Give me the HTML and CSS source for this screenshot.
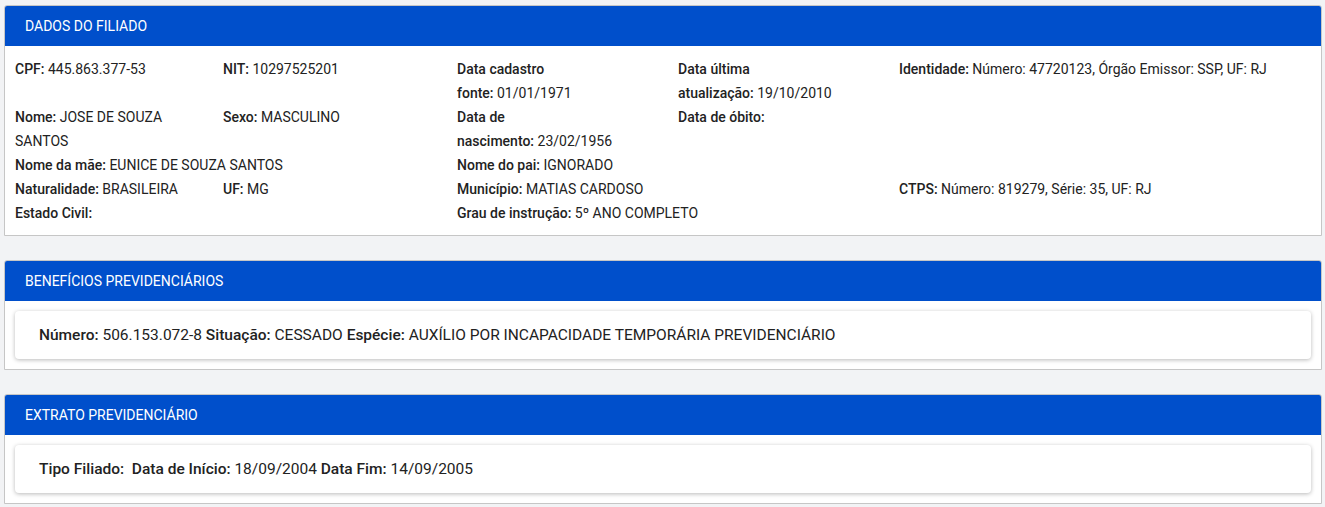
FILE: index.html
```html
<!DOCTYPE html>
<html lang="pt-BR">
<head>
<meta charset="utf-8">
<title>Dados do Filiado</title>
<link rel="stylesheet" href="styles.css">
</head>
<body>
<section class="panel">
  <header class="panel-header">DADOS DO FILIADO</header>
  <div class="panel-body filiado">
    <div class="c1"><b>CPF:</b> 445.863.377-53</div>
    <div class="c2"><b>NIT:</b> 10297525201</div>
    <div class="c3"><b>Data cadastro<br>fonte:</b> 01/01/1971</div>
    <div class="c4"><b>Data última<br>atualização:</b> 19/10/2010</div>
    <div class="c5"><b>Identidade:</b> Número: 47720123, Órgão Emissor: SSP, UF: RJ</div>

    <div class="c1 w180"><b>Nome:</b> JOSE DE SOUZA SANTOS</div>
    <div class="c2"><b>Sexo:</b> MASCULINO</div>
    <div class="c3"><b>Data de<br>nascimento:</b> 23/02/1956</div>
    <div class="c4"><b>Data de óbito:</b></div>

    <div class="c12"><b>Nome da mãe:</b> EUNICE DE SOUZA SANTOS</div>
    <div class="c34"><b>Nome do pai:</b> IGNORADO</div>

    <div class="c1"><b>Naturalidade:</b> BRASILEIRA</div>
    <div class="c2"><b>UF:</b> MG</div>
    <div class="c34"><b>Município:</b> MATIAS CARDOSO</div>
    <div class="c5"><b>CTPS:</b> Número: 819279, Série: 35, UF: RJ</div>

    <div class="c1"><b>Estado Civil:</b></div>
    <div class="c34"><b>Grau de instrução:</b> 5º ANO COMPLETO</div>
  </div>
</section>

<section class="panel">
  <header class="panel-header">BENEFÍCIOS PREVIDENCIÁRIOS</header>
  <div class="panel-body padded">
    <div class="card"><b>Número:</b> 506.153.072-8 <b>Situação:</b> CESSADO <b>Espécie:</b> AUXÍLIO POR INCAPACIDADE TEMPORÁRIA PREVIDENCIÁRIO</div>
  </div>
</section>

<section class="panel">
  <header class="panel-header">EXTRATO PREVIDENCIÁRIO</header>
  <div class="panel-body padded">
    <div class="card"><b>Tipo Filiado:</b>&nbsp; <b>Data de Início:</b> 18/09/2004 <b>Data Fim:</b> 14/09/2005</div>
  </div>
</section>
</body>
</html>
```

FILE: styles.css
```css
html, body {
  margin: 0;
  padding: 0;
}
body {
  background: #f2f3f5;
  font-family: Roboto, "Liberation Sans", Arial, sans-serif;
  color: #222;
  padding: 5px 3px 0 4px;
  display: flex;
  flex-direction: column;
  gap: 24px;
}
b {
  font-weight: 500;
}
.panel {
  border: 1px solid #c6c6c6;
  background: #fff;
  border-radius: 3px 3px 0 0;
  overflow: hidden;
}
.panel-header {
  background: #004fcb;
  color: #fff;
  font-size: 14px;
  height: 40px;
  line-height: 40px;
  padding-left: 20px;
}
.filiado {
  display: grid;
  grid-template-columns: 208px 234px 221px 221px 1fr;
  padding: 11px 10px 10px 10px;
  font-size: 14px;
  line-height: 24px;
}
.c1 { grid-column: 1; }
.c2 { grid-column: 2; }
.c3 { grid-column: 3; }
.c4 { grid-column: 4; }
.c5 { grid-column: 5; }
.c12 { grid-column: 1 / 3; }
.c34 { grid-column: 3 / 5; }
.w180 { max-width: 180px; }
.padded {
  padding: 10px;
}
.card {
  background: #fff;
  border-radius: 4px;
  box-shadow: 0 1px 4px rgba(0, 0, 0, 0.28);
  height: 48px;
  line-height: 48px;
  padding-left: 24px;
  font-size: 15.5px;
}
```
